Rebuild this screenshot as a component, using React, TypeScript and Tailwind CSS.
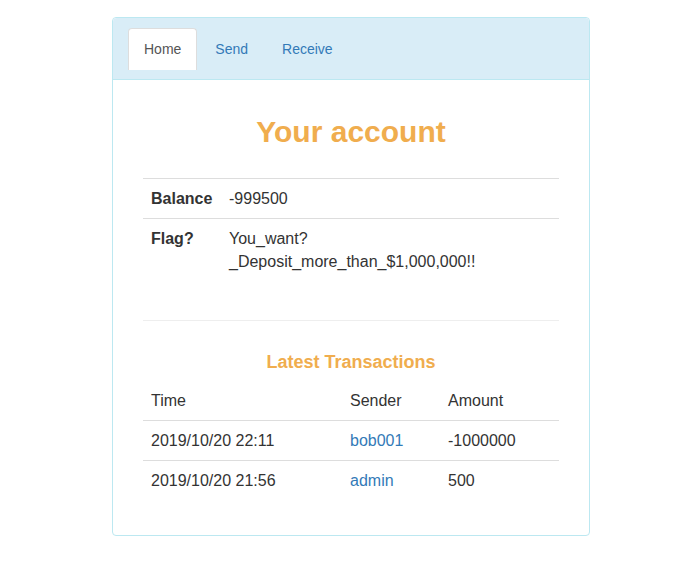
import React from 'react';

const transactions = [
  { time: '2019/10/20 22:11', sender: 'bob001', amount: '-1000000' },
  { time: '2019/10/20 21:56', sender: 'admin', amount: '500' },
];

const tabs = ['Home', 'Send', 'Receive'];

const App: React.FC = () => {
  return (
    <div className="min-h-[587px] bg-white pl-[112px] pt-[17px] text-[#333] font-['Liberation_Sans',Arial,sans-serif]">
      <div className="w-[478px] rounded border border-[#bce8f1]">
        {/* header with tabs */}
        <div className="rounded-t bg-[#d9edf7] border-b border-[#bce8f1] px-[15px] pt-[10px] h-[62px]">
          <ul className="flex text-[14px] leading-5">
            {tabs.map((t, i) => (
              <li key={t} className="mr-[2px]">
                {i === 0 ? (
                  <span className="block rounded-t border border-b-0 border-[#ddd] bg-white px-[15px] py-[10px] h-[42px] text-[#555]">{t}</span>
                ) : (
                  <span className="block px-[15px] py-[10px] border border-transparent text-[#337ab7]">{t}</span>
                )}
              </li>
            ))}
          </ul>
        </div>

        <div className="px-[30px] pt-[15px] pb-[15px]">
          <h2 className="mt-[20px] text-center text-[30px] leading-[33px] font-bold text-[#f0ad4e]">Your account</h2>

          <table className="mt-[30px] w-full text-[16px] leading-[23px]">
            <tbody>
              <tr className="border-t border-[#ddd]">
                <th className="w-[78px] p-2 text-left align-top font-bold">Balance</th>
                <td className="p-2 align-top">-999500</td>
              </tr>
              <tr className="border-t border-[#ddd]">
                <th className="p-2 text-left align-top font-bold">Flag?</th>
                <td className="p-2 align-top">You_want?<br />_Deposit_more_than_$1,000,000!!</td>
              </tr>
            </tbody>
          </table>

          <hr className="mt-[39px] border-t border-[#eee]" />

          <h3 className="mt-[31px] text-center text-[18px] leading-[20px] font-bold text-[#f0ad4e]">Latest Transactions</h3>

          <table className="mt-[9px] mb-[20px] w-full text-[16px] leading-[23px]">
            <thead>
              <tr className="border-b border-[#ddd]">
                <th className="w-[199px] p-2 text-left font-normal">Time</th>
                <th className="w-[98px] p-2 text-left font-normal">Sender</th>
                <th className="p-2 text-left font-normal">Amount</th>
              </tr>
            </thead>
            <tbody>
              {transactions.map((tx, i) => (
                <tr key={tx.time} className={i > 0 ? 'border-t border-[#ddd]' : ''}>
                  <td className="p-2">{tx.time}</td>
                  <td className="p-2 text-[#337ab7]">{tx.sender}</td>
                  <td className="p-2">{tx.amount}</td>
                </tr>
              ))}
            </tbody>
          </table>
        </div>
      </div>
    </div>
  );
};

export default App;
